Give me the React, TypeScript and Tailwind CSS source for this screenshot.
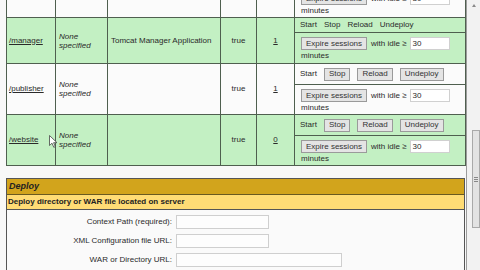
import React from 'react'

type App = {
  path: string
  name: string
  sessions: string
  green: boolean
  self?: boolean
}

// first row is scrolled mostly out of view: only its last command line shows
const apps: App[] = [
  { path: '', name: '', sessions: '', green: false },
  { path: '/manager', name: 'Tomcat Manager Application', sessions: '1', green: true, self: true },
  { path: '/publisher', name: '', sessions: '1', green: false },
  { path: '/website', name: '', sessions: '0', green: true },
]

const Btn: React.FC<{ children: React.ReactNode }> = ({ children }) => (
  <span className="inline-flex h-[13px] items-center border border-[#9a9a9a] bg-[#e4e4e4] px-[4px] leading-none text-[#333]">
    {children}
  </span>
)

const Cursor: React.FC = () => (
  <svg className="absolute left-[40px] top-[0px] h-[13px] w-[9px]" viewBox="0 0 9 13">
    <path d="M0.5 0.5 L0.5 10.5 L3 8.2 L4.8 12.3 L6.3 11.6 L4.6 7.7 L8 7.7 Z" fill="#fff" stroke="#444" strokeWidth="0.8" />
  </svg>
)

const AppRows: React.FC<{ app: App }> = ({ app }) => {
  const bg = app.green ? 'bg-[#c3f0c3]' : 'bg-[#fbfbfb]'
  const cell = `border border-[#4f5f4f] ${bg}`
  const cmdTop = app.self ? 'h-[15px]' : 'h-[21px]'
  const cmdBottom = app.self ? 'h-[31px]' : 'h-[30px]'
  return (
    <>
      <tr>
        <td rowSpan={2} className={`${cell} px-[2px] align-middle`}>
          {app.path && (
            <span className="relative underline">
              {app.path}
              {app.path === '/website' && <Cursor />}
            </span>
          )}
        </td>
        <td rowSpan={2} className={`${cell} px-[3px] align-middle italic leading-[9px]`}>
          {app.path && 'None specified'}
        </td>
        <td rowSpan={2} className={`${cell} px-[3px] align-middle`}>{app.name}</td>
        <td rowSpan={2} className={`${cell} text-center align-middle`}>{app.path && 'true'}</td>
        <td rowSpan={2} className={`${cell} text-center align-middle`}>
          <span className="underline">{app.sessions}</span>
        </td>
        <td className={`${cell} ${cmdTop} pl-[5px] align-middle`}>
          {app.self ? (
            <div className="flex gap-[7px]">
              <span>Start</span>
              <span>Stop</span>
              <span>Reload</span>
              <span>Undeploy</span>
            </div>
          ) : app.path ? (
            <div className="flex items-center gap-[7px]">
              <span>Start</span>
              <Btn>Stop</Btn>
              <Btn>Reload</Btn>
              <Btn>Undeploy</Btn>
            </div>
          ) : null}
        </td>
      </tr>
      <tr>
        <td className={`${cell} ${cmdBottom} pl-[6px] align-top`}>
          <div className="mt-[4px] flex items-center">
            <Btn>Expire sessions</Btn>
            <span className="ml-[4px]">with idle ≥</span>
            <span className="ml-[3px] flex h-[13px] w-[40px] items-center border border-[#d0d0d0] bg-white pl-[2px]">30</span>
          </div>
          <div className="mt-[1px] leading-[10px]">minutes</div>
        </td>
      </tr>
    </>
  )
}

const FormRow: React.FC<{ label: string; wide?: boolean }> = ({ label, wide }) => (
  <div className="flex h-[19px] items-center">
    <span className="w-[169px] pr-[4px] text-right">{label}</span>
    <span
      className={`h-[14px] border border-[#cfcfcf] bg-[#fdfdfd] ${wide ? 'w-[166px]' : 'w-[93px]'}`}
    />
  </div>
)

export default function App() {
  return (
    <div className="flex h-[270px] w-[480px] overflow-hidden bg-[#f8f8f8] font-['Liberation_Sans',Arial,sans-serif] text-[8px] text-[#2a2a2a]">
      <div className="w-[467px] overflow-hidden border-r border-[#9c9c9c]">
        <div className="-mt-[34px] pl-[6px]">
          <table className="w-[459px] table-fixed border-collapse">
            <colgroup>
              <col className="w-[49px]" />
              <col className="w-[52px]" />
              <col className="w-[113px]" />
              <col className="w-[36px]" />
              <col className="w-[38px]" />
              <col className="w-[171px]" />
            </colgroup>
            <tbody>
              {apps.map((a, i) => (
                <AppRows key={i} app={a} />
              ))}
            </tbody>
          </table>

          <div className="mt-[12px] w-[459px] border border-[#555]">
            <div className="flex h-[16px] items-center border-b border-[#6a5a20] bg-[#d2a41c] pl-[2px] text-[9px] font-bold italic text-[#222]">
              Deploy
            </div>
            <div className="flex h-[15px] items-center border-b border-[#555] bg-[#ffdc75] pl-[1px] font-bold text-[#222]">
              Deploy directory or WAR file located on server
            </div>
            <div className="bg-[#fafafa] pt-[2px] pb-[20px]">
              <FormRow label="Context Path (required):" />
              <FormRow label="XML Configuration file URL:" />
              <FormRow label="WAR or Directory URL:" wide />
            </div>
          </div>
        </div>
      </div>

      <div className="relative w-[13px] bg-[#f2f2f2]">
        <svg className="absolute left-[5px] top-[4px] h-[3px] w-[4px]" viewBox="0 0 4 3">
          <path d="M0 3 L2 0 L4 3 Z" fill="#8a8a8a" />
        </svg>
        <div className="absolute left-[5px] top-[130px] flex h-[98px] w-[8px] items-center justify-center border border-[#a9a9a9] bg-[#e3e3e3]">
          <div className="flex flex-col gap-[1px]">
            <span className="h-px w-[4px] bg-[#888]" />
            <span className="h-px w-[4px] bg-[#888]" />
            <span className="h-px w-[4px] bg-[#888]" />
          </div>
        </div>
      </div>
    </div>
  )
}
